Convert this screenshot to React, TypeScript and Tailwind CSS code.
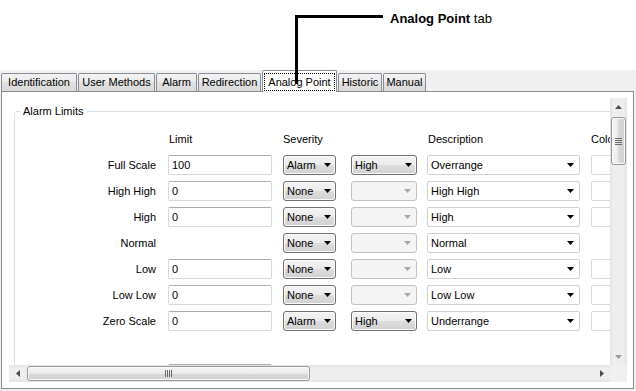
import React from 'react';

type Row = {
  label: string;
  limit: string | null;
  sev: string;
  sev2: string | null;
  desc: string;
  color: boolean;
};

const rows: Row[] = [
  { label: 'Full Scale', limit: '100', sev: 'Alarm', sev2: 'High', desc: 'Overrange', color: true },
  { label: 'High High', limit: '0', sev: 'None', sev2: null, desc: 'High High', color: true },
  { label: 'High', limit: '0', sev: 'None', sev2: null, desc: 'High', color: true },
  { label: 'Normal', limit: null, sev: 'None', sev2: null, desc: 'Normal', color: false },
  { label: 'Low', limit: '0', sev: 'None', sev2: null, desc: 'Low', color: true },
  { label: 'Low Low', limit: '0', sev: 'None', sev2: null, desc: 'Low Low', color: true },
  { label: 'Zero Scale', limit: '0', sev: 'Alarm', sev2: 'High', desc: 'Underrange', color: true },
];

const tabs = [
  { name: 'Identification', w: 'w-[76px]' },
  { name: 'User Methods', w: 'w-[77px]' },
  { name: 'Alarm', w: 'w-[41px]' },
  { name: 'Redirection', w: 'w-[63px]' },
  { name: 'Analog Point', w: 'w-[75px]', active: true },
  { name: 'Historic', w: 'w-[44px]' },
  { name: 'Manual', w: 'w-[43px]' },
];

function Caret({ color = '#000' }: { color?: string }) {
  return (
    <svg width="7" height="4" viewBox="0 0 7 4" className="shrink-0">
      <path d="M0 0H7L3.5 4Z" fill={color} />
    </svg>
  );
}

function ButtonCombo({ value, className }: { value: string | null; className: string }) {
  if (value === null) {
    return (
      <div
        className={`${className} h-[20px] rounded-[3px] border border-[#c3c3c3] bg-[#f4f4f4] flex items-center justify-end pr-[5px]`}
      >
        <Caret color="#a8a8a8" />
      </div>
    );
  }
  return (
    <div
      className={`${className} h-[20px] rounded-[3px] border border-[#707070] bg-[linear-gradient(#f4f4f4,#ebebeb_50%,#dedede_50%,#d0d0d0)] shadow-[inset_0_0_0_1px_#fbfbfb] flex items-center pl-[3px] pr-[4px]`}
    >
      <span className="flex-1 leading-[13px]">{value}</span>
      <Caret />
    </div>
  );
}

function ScrollTri({ dir }: { dir: 'up' | 'down' | 'left' | 'right' }) {
  if (dir === 'up')
    return (
      <svg width="7" height="4" viewBox="0 0 7 4">
        <path d="M0 4H7L3.5 0Z" fill="#4d4d4d" />
      </svg>
    );
  if (dir === 'down')
    return (
      <svg width="7" height="4" viewBox="0 0 7 4">
        <path d="M0 0H7L3.5 4Z" fill="#9a9a9a" />
      </svg>
    );
  if (dir === 'left')
    return (
      <svg width="4" height="7" viewBox="0 0 4 7">
        <path d="M4 0V7L0 3.5Z" fill="#4d4d4d" />
      </svg>
    );
  return (
    <svg width="4" height="7" viewBox="0 0 4 7">
      <path d="M0 0V7L4 3.5Z" fill="#4d4d4d" />
    </svg>
  );
}

export default function App() {
  return (
    <div className="relative w-[636px] h-[391px] overflow-hidden bg-white text-black text-[11px] font-['Liberation_Sans',Arial,sans-serif]">
      {/* annotation */}
      <div className="h-[70px] pt-[11px] pl-[390px] text-[13px] leading-[15px]">
        <span className="font-bold">Analog Point</span> tab
      </div>

      {/* window area */}
      <div className="h-[321px] bg-[#f0f0f0]">
        {/* tab strip */}
        <div className="h-[21px] flex items-end pl-[1px] gap-[1px]">
          {tabs.map((t) =>
            t.active ? (
              <div
                key={t.name}
                className={`${t.w} h-[22px] -mb-[1px] relative z-10 bg-white border-t border-l border-r border-[#898c95] rounded-t-[2px] px-[1px] pt-[2px] pb-[1px] flex`}
              >
                <div className="flex-1 border border-dotted border-black flex items-center justify-center leading-[13px]">
                  {t.name}
                </div>
              </div>
            ) : (
              <div
                key={t.name}
                className={`${t.w} h-[18px] border-t border-l border-r border-[#898c95] rounded-t-[2px] bg-[linear-gradient(#f3f3f3,#ebebeb_50%,#e1e1e1_50%,#d9d9d9)] flex items-center justify-center leading-[13px]`}
              >
                {t.name}
              </div>
            ),
          )}
        </div>

        {/* panel */}
        <div className="ml-[1px] w-[633px] h-[298px] border border-[#898c95] bg-white pl-[7px] pr-[6px] pt-[6px] pb-[6px]">
          <div className="grid grid-cols-[601px_17px] grid-rows-[267px_17px]">
            {/* viewport */}
            <div className="overflow-hidden">
              <div className="pl-[5px] pt-[7px]">
                <fieldset className="w-[720px] min-w-0 border border-[#d5dfe5] rounded-[3px] pb-[60px]">
                  <legend className="ml-[5px] px-[3px] leading-[13px]">Alarm Limits</legend>

                  {/* headers */}
                  <div className="mt-[15px] h-[13px] flex leading-[13px]">
                    <div className="w-[141px]" />
                    <div className="ml-[12px] w-[104px] pl-[1px]">Limit</div>
                    <div className="ml-[11px] w-[53px]">Severity</div>
                    <div className="ml-[15px] w-[66px]" />
                    <div className="ml-[10px] w-[153px] pl-[1px]">Description</div>
                    <div className="ml-[11px] w-[60px]">Color</div>
                  </div>

                  {/* rows */}
                  <div className="mt-[9px] flex flex-col gap-[6px]">
                    {rows.map((r) => (
                      <div key={r.label} className="h-[20px] flex items-center">
                        <div className="w-[141px] text-right leading-[13px]">{r.label}</div>
                        {r.limit !== null ? (
                          <div className="ml-[12px] w-[104px] h-[20px] rounded-[2px] border border-[#d6d9de] border-t-[#abadb3] bg-white flex items-center pl-[3px] leading-[13px]">
                            {r.limit}
                          </div>
                        ) : (
                          <div className="ml-[12px] w-[104px] h-[20px]" />
                        )}
                        <ButtonCombo value={r.sev} className="ml-[11px] w-[53px]" />
                        <ButtonCombo value={r.sev2} className="ml-[15px] w-[66px]" />
                        <div className="ml-[10px] w-[153px] h-[20px] rounded-[2px] border border-[#cdd0d5] bg-white flex items-center pl-[3px] pr-[5px]">
                          <span className="flex-1 leading-[13px]">{r.desc}</span>
                          <Caret />
                        </div>
                        {r.color ? (
                          <div className="ml-[11px] w-[40px] h-[20px] rounded-[2px] border border-[#d6d9de] bg-white" />
                        ) : (
                          <div className="ml-[11px] w-[40px] h-[20px]" />
                        )}
                      </div>
                    ))}
                  </div>

                  {/* partially visible next row */}
                  <div className="mt-[33px] h-[20px] flex">
                    <div className="w-[141px]" />
                    <div className="ml-[12px] w-[104px] h-[20px] rounded-[2px] border border-[#d6d9de] border-t-[#abadb3] bg-white" />
                  </div>
                </fieldset>
              </div>
            </div>

            {/* vertical scrollbar */}
            <div className="h-[267px] bg-[linear-gradient(90deg,#e3e3e3,#eeeeee_20%,#eeeeee_80%,#e3e3e3)] flex flex-col">
              <div className="h-[17px] flex items-center justify-center">
                <ScrollTri dir="up" />
              </div>
              <div className="mt-[2px] mx-[1px] h-[48px] rounded-[3px] border border-[#979797] bg-[linear-gradient(90deg,#f5f5f5,#eaeaea_50%,#d9d9d9_50%,#d0d0d0)] shadow-[inset_0_0_0_1px_#f9f9f9] flex items-center justify-center">
                <svg width="7" height="7" viewBox="0 0 7 7">
                  <path d="M0 0.5H7M0 2.5H7M0 4.5H7M0 6.5H7" stroke="#6a6a6a" strokeWidth="1" />
                </svg>
              </div>
              <div className="flex-1" />
              <div className="h-[17px] flex items-center justify-center">
                <ScrollTri dir="down" />
              </div>
            </div>

            {/* horizontal scrollbar */}
            <div className="h-[17px] bg-[linear-gradient(#e3e3e3,#eeeeee_20%,#eeeeee_80%,#e3e3e3)] flex items-center">
              <div className="w-[17px] h-[17px] flex items-center justify-center">
                <ScrollTri dir="left" />
              </div>
              <div className="ml-[1px] w-[283px] h-[15px] rounded-[3px] border border-[#979797] bg-[linear-gradient(#f5f5f5,#eaeaea_50%,#d9d9d9_50%,#d0d0d0)] shadow-[inset_0_0_0_1px_#f9f9f9] flex items-center justify-center">
                <svg width="7" height="7" viewBox="0 0 7 7">
                  <path d="M0.5 0V7M2.5 0V7M4.5 0V7M6.5 0V7" stroke="#6a6a6a" strokeWidth="1" />
                </svg>
              </div>
              <div className="flex-1" />
              <div className="w-[17px] h-[17px] flex items-center justify-center">
                <ScrollTri dir="right" />
              </div>
            </div>

            {/* corner */}
            <div className="h-[17px] bg-[#f0f0f0]" />
          </div>
        </div>
      </div>

      {/* callout line over the tab strip */}
      <svg className="absolute left-0 top-0 z-20 pointer-events-none" width="636" height="100">
        <rect x="295" y="15" width="88" height="3" fill="#000" />
        <rect x="295" y="15" width="3" height="69" fill="#000" />
      </svg>
    </div>
  );
}
